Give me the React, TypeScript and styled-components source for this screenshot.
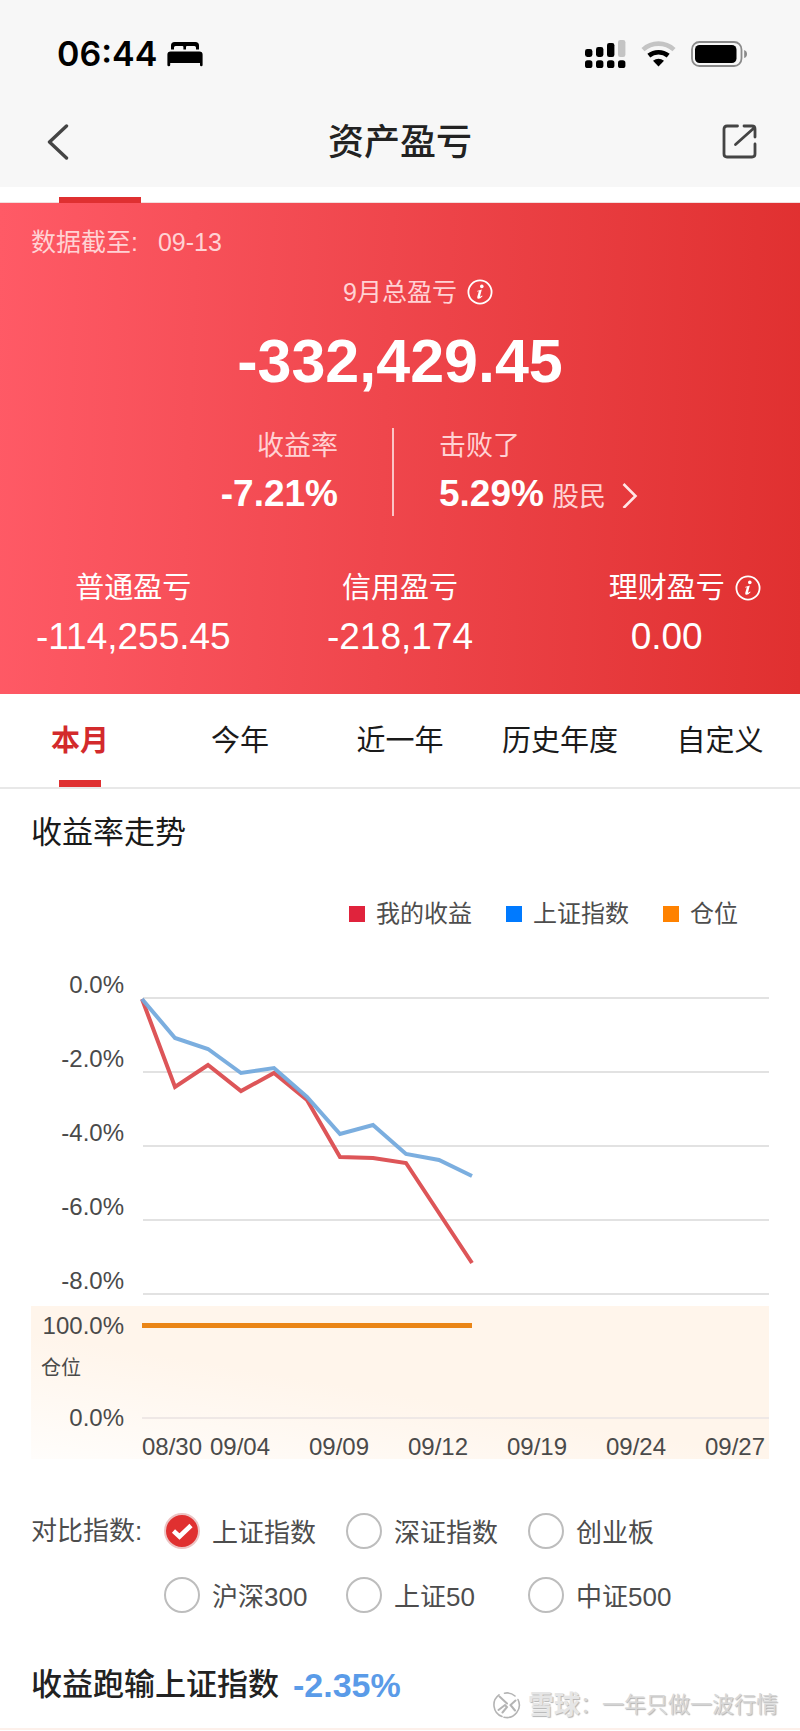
import React, { useState } from "react";
import styled, { createGlobalStyle } from "styled-components";

const sans = '"Liberation Sans", "Noto Sans CJK SC", sans-serif';

const GlobalStyle = createGlobalStyle`
  * { box-sizing: border-box; }
  body { margin: 0; background: #fff; font-family: ${sans}; font-weight: 400; color: #1a1a1a; }
  button { border: 0; padding: 0; background: none; font: inherit; color: inherit; cursor: pointer; }
  svg { display: block; }
`;

const Page = styled.main`
  position: relative;
  background: #fff;
`;

const TopArea = styled.header`
  background: #f7f7f7;
`;

const StatusBar = styled.div`
  display: flex;
  align-items: center;
  justify-content: space-between;
  height: 96px;
  padding: 11px 52px 0 57px;
`;

const Clock = styled.div`
  display: flex;
  align-items: center;
  gap: 10px;
  font-family: Inter, sans-serif;
  font-size: 34px;
  font-weight: 600;
  color: #000;
`;

const StatusIcons = styled.div`
  display: flex;
  align-items: center;
  gap: 15px;
`;

const NavBar = styled.div`
  display: flex;
  align-items: center;
  justify-content: space-between;
  height: 91px;
  padding: 0 42px;
`;

const NavTitle = styled.h1`
  margin: 0;
  padding-top: 2px;
  font-size: 36px;
  line-height: 44px;
  font-weight: 500;
  color: #222;
`;

const Strip = styled.div`
  display: flex;
  align-items: flex-end;
  height: 16px;
  padding-left: 59px;
  border-bottom: 1px solid #f3dede;
`;

const StripBar = styled.div`
  width: 82px;
  height: 6px;
  margin-bottom: -1px;
  background: #df3031;
`;

const Hero = styled.section`
  padding: 23px 0 35px;
  background: linear-gradient(92deg, #ff5a66 0%, #ef464c 48%, #e03030 100%);
  color: #fff;
`;

const AsOf = styled.div`
  display: flex;
  padding: 0 31px;
  gap: 20px;
  font-size: 25px;
  line-height: 32px;
  color: #ffd2d4;
`;

const HeroLabel = styled.div`
  display: flex;
  align-items: center;
  justify-content: center;
  margin-top: 18px;
  font-size: 25px;
  line-height: 32px;
  color: #ffd2d4;
`;

const InfoButton = styled.button`
  width: 26px;
  height: 26px;
  margin: 0 -36px 0 10px;
  color: #fff;
`;

const Total = styled.div`
  margin-top: 20px;
  font-size: 61px;
  line-height: 66px;
  font-weight: 700;
  text-align: center;
`;

const RateRow = styled.div`
  display: grid;
  grid-template-columns: 49% 2px 1fr;
  margin-top: 34px;
`;

const RateDivider = styled.div`
  background: #fbc4c6;
`;

const RateCell = styled.div<{ $end?: boolean }>`
  display: flex;
  flex-direction: column;
  gap: 8px;
  align-items: ${(p) => (p.$end ? "flex-end" : "flex-start")};
  padding: ${(p) => (p.$end ? "0 54px 0 0" : "0 0 0 45px")};
`;

const RateLabel = styled.span`
  font-size: 27px;
  line-height: 36px;
  color: #ffd2d4;
`;

const RateValue = styled.strong`
  font-size: 37px;
  line-height: 44px;
  font-weight: 700;
`;

const BeatLink = styled.button`
  display: flex;
  align-items: center;
  gap: 8px;
`;

const BeatUnit = styled.span`
  padding-top: 6px;
  margin-right: 8px;
  font-size: 27px;
  line-height: 38px;
  color: #ffd2d4;
`;

const Split = styled.div`
  display: grid;
  grid-template-columns: repeat(3, 1fr);
  margin-top: 54px;
`;

const SplitCell = styled.div`
  display: flex;
  flex-direction: column;
  gap: 9px;
  text-align: center;
`;

const SplitLabel = styled.div`
  display: flex;
  align-items: center;
  justify-content: center;
  font-size: 29px;
  line-height: 36px;
`;

const SplitValue = styled.div`
  font-size: 37px;
  line-height: 44px;
`;

const Tabs = styled.nav`
  display: grid;
  grid-template-columns: repeat(5, 1fr);
  border-bottom: 2px solid #e8e8e8;
`;

const Tab = styled.button<{ $active: boolean }>`
  display: flex;
  flex-direction: column;
  align-items: center;
  height: 93px;
  font-size: 29px;
  line-height: 94px;
  font-weight: ${(p) => (p.$active ? 700 : 400)};
  color: ${(p) => (p.$active ? "#d32a2c" : "#1a1a1a")};

  &::after {
    content: "";
    width: 42px;
    height: 7px;
    margin-top: -8px;
    background: ${(p) => (p.$active ? "#df3031" : "transparent")};
  }
`;

const Body = styled.section`
  padding: 24px 31px 23px;
  border-bottom: 2px solid #fdf0ea;
`;

const SectionTitle = styled.h2`
  margin: 0;
  font-size: 31px;
  line-height: 40px;
  font-weight: 400;
`;

const Legend = styled.ul`
  display: flex;
  justify-content: flex-end;
  gap: 34px;
  margin: 45px 0 30px;
  padding: 0 31px 0 0;
  list-style: none;
  font-size: 24px;
  line-height: 32px;
  color: #4d4d4d;
`;

const LegendItem = styled.li<{ $color: string }>`
  display: flex;
  align-items: center;
  gap: 11px;

  &::before {
    content: "";
    width: 16px;
    height: 16px;
    background: ${(p) => p.$color};
  }
`;

const ChartSvg = styled.svg`
  width: 100%;
  height: auto;
  font-family: ${sans};
  font-size: 24px;
  fill: #4a4a4a;
`;

const Compare = styled.div`
  display: grid;
  grid-template-columns: 133px 1fr;
  margin-top: 51px;
  font-size: 26px;
  line-height: 40px;
  color: #4d4d4d;
`;

const Options = styled.div`
  display: grid;
  grid-template-columns: repeat(3, minmax(0, 182px));
  row-gap: 24px;
`;

const Option = styled.label`
  display: flex;
  align-items: center;
  gap: 12px;
  height: 40px;
  white-space: nowrap;
`;

const OptionText = styled.span`
  padding-top: 4px;
`;

const Mark = styled.span`
  display: grid;
  flex: none;
  width: 36px;
  height: 36px;

  & > * { grid-area: 1 / 1; }
  & > svg { pointer-events: none; }
`;

const Radio = styled.input`
  appearance: none;
  width: 36px;
  height: 36px;
  margin: 0;
  border: 2px solid #bdbdbd;
  border-radius: 50%;
  background: #fff;

  &:checked {
    border-color: #ecc4c4;
    background: #e03030;
  }
`;

const Summary = styled.p`
  display: flex;
  gap: 14px;
  margin: 50px 0 0;
  font-size: 31px;
  line-height: 40px;
  font-weight: 500;
  color: #222;
`;

const SummaryValue = styled.strong`
  font-size: 34px;
  font-weight: 700;
  color: #5a9be8;
`;

const Watermark = styled.div`
  position: absolute;
  right: 22px;
  bottom: 11px;
  display: flex;
  align-items: center;
  font-size: 22px;
  line-height: 28px;
  color: #d8d8d8;
  text-shadow: 1px 1px 1px #b4b4b4;
`;

const WatermarkName = styled.b`
  margin-left: 7px;
  font-size: 26px;
  font-weight: 700;
  color: #e6e6e6;
`;

const InfoIcon = () => (
  <svg width="26" height="26" viewBox="0 0 26 26" fill="none">
    <circle cx="13" cy="13" r="11.6" stroke="currentColor" strokeWidth="1.8" />
    <circle cx="14.8" cy="7.4" r="1.8" fill="currentColor" />
    <path d="M10 12 14.800 10.600 13 17.500Q12.900 18.200 15.200 16.600L15.500 17.200Q13 20 11.200 19.800 9.800 19.500 10.300 17.700L11.800 12.500Q11.700 12.100 10 12.600Z" fill="currentColor" />
  </svg>
);

const BedIcon = () => (
  <svg width="36" height="26" viewBox="0 0 36 26" fill="#000">
    <path d="M4 8.4V4.6Q4 1 7.6 1h20.8Q32 1 32 4.6v3.8h-3V6.6Q29 5 27.4 5H20q-1 0-1 1v2.4h-2.6V6q0-1-1-1H8.6Q7 5 7 6.6v1.8Z" />
    <path d="M3.6 10.4h28.8q3.2 0 3.2 3.2V24q0 1.2-1.3 1.2T33 24v-2H3.2v2q0 1.2-1.4 1.2T.4 24V13.6q0-3.2 3.2-3.2Z" />
  </svg>
);

const SignalIcon = () => (
  <svg width="41" height="28" viewBox="0 0 41 28">
    <rect x="0" y="9" width="7.4" height="8" rx="2.4" />
    <rect x="11" y="7" width="7.4" height="10" rx="2.4" />
    <rect x="22" y="3" width="7.4" height="14" rx="2.2" />
    <rect x="33" y="0" width="7.4" height="17" rx="2.2" fill="#c4c4c4" />
    {[0, 11, 22, 33].map((x) => (
      <rect key={x} x={x} y="20.2" width="7.4" height="7.8" rx="2.6" />
    ))}
  </svg>
);

const WifiIcon = () => (
  <svg width="35" height="26" viewBox="0 0 35 26" fill="none" strokeWidth="4.6">
    <path d="M2 8.6Q8.700 2.600 17.500 2.600T33 8.600" stroke="#c4c4c4" />
    <path d="M7.800 14.600Q12 11.200 17.500 11.200T27.200 14.600" stroke="#000" />
    <path d="M12 19.800Q17.500 15.600 23 19.800L17.500 25.600Z" fill="#000" />
  </svg>
);

const BatteryIcon = () => (
  <svg width="57" height="28" viewBox="0 0 57 28" fill="none">
    <rect x="1" y="2" width="49.500" height="24" rx="7.500" stroke="#8a8a8a" strokeWidth="1.800" />
    <rect x="4" y="5" width="41.500" height="18" rx="4.600" fill="#000" />
    <path d="M53.200 10q2.800 1 2.800 4t-2.800 4Z" fill="#8a8a8a" />
  </svg>
);

const dayStep = 33;
const plotLeft = 112;
const plotWidth = 626;
const myReturn = [39, 127, 105, 131, 113, 140, 197, 198, 203, 253, 303];
const indexReturn = [39, 78, 89, 113, 108, 137, 174, 165, 194, 200, 216];
const ticks = ["0.0%", "-2.0%", "-4.0%", "-6.0%", "-8.0%"];
const dates: [string, number][] = [
  ["08/30", 141],
  ["09/04", 209],
  ["09/09", 308],
  ["09/12", 407],
  ["09/19", 506],
  ["09/24", 605],
  ["09/27", 704],
];
const toPoints = (ys: number[]) => ys.map((y, i) => `${plotLeft + i * dayStep - 1},${y}`).join(" ");

const TrendChart = () => (
  <ChartSvg viewBox="0 0 738 500" role="img" aria-label="收益率走势">
    <defs>
      <linearGradient id="positionFill" x1="0" y1="1" x2="0.400" y2="0.500">
        <stop offset="0" stopColor="#fffdfb" />
        <stop offset="1" stopColor="#fff5eb" />
      </linearGradient>
    </defs>
    {ticks.map((t, i) => (
      <g key={t}>
        <text x="93" y={33 + i * 74} textAnchor="end">{t}</text>
        <rect x={plotLeft} y={37 + i * 74} width={plotWidth} height="2" fill="#e2e2e2" />
      </g>
    ))}
    <polyline points={toPoints(myReturn)} fill="none" stroke="#dd5558" strokeWidth="4" />
    <polyline points={toPoints(indexReturn)} fill="none" stroke="#74aadd" strokeOpacity="0.95" strokeWidth="4" />
    <rect x="0" y="346" width="738" height="153" fill="url(#positionFill)" />
    <rect x={plotLeft - 1} y="457" width={plotWidth + 1} height="2" fill="#efe8e6" />
    <rect x={plotLeft - 1} y="363" width={dayStep * 10} height="5" fill="#ea8516" />
    <text x="93" y="374" textAnchor="end">100.0%</text>
    <text x="10" y="415" fontSize="20">仓位</text>
    <text x="93" y="466" textAnchor="end">0.0%</text>
    {dates.map(([d, x]) => (
      <text key={d} x={x} y="495" textAnchor="middle">{d}</text>
    ))}
  </ChartSvg>
);

const tabNames = ["本月", "今年", "近一年", "历史年度", "自定义"];
const indexes = ["上证指数", "深证指数", "创业板", "沪深300", "上证50", "中证500"];

export default function App() {
  const [tab, setTab] = useState("本月");
  const [index, setIndex] = useState("上证指数");

  return (
    <Page lang="zh-CN">
      <GlobalStyle />
      <TopArea>
        <StatusBar>
          <Clock>
            06:44
            <BedIcon />
          </Clock>
          <StatusIcons>
            <SignalIcon />
            <WifiIcon />
            <BatteryIcon />
          </StatusIcons>
        </StatusBar>
        <NavBar>
          <button type="button" aria-label="返回">
            <svg width="36" height="36" viewBox="0 0 36 36" fill="none" stroke="#444" strokeWidth="3.400" strokeLinecap="round" strokeLinejoin="round">
              <path d="M24.500 2 7.500 18l17 16" />
            </svg>
          </button>
          <NavTitle>资产盈亏</NavTitle>
          <button type="button" aria-label="分享">
            <svg width="36" height="36" viewBox="0 0 36 36" fill="none" stroke="#444" strokeWidth="2.800" strokeLinecap="round" strokeLinejoin="round">
              <path d="M15.500 2H5Q2 2 2 5v25q0 3 3 3h25q3 0 3-3V20" />
              <path d="M22 2h8q3 0 3 3v8M32 4 13.500 20.500" />
            </svg>
          </button>
        </NavBar>
      </TopArea>
      <Strip>
        <StripBar />
      </Strip>

      <Hero>
        <AsOf>
          <span>数据截至:</span>
          <span>09-13</span>
        </AsOf>
        <HeroLabel>
          9月总盈亏
          <InfoButton type="button" aria-label="总盈亏说明">
            <InfoIcon />
          </InfoButton>
        </HeroLabel>
        <Total>-332,429.45</Total>
        <RateRow>
          <RateCell $end>
            <RateLabel>收益率</RateLabel>
            <RateValue>-7.21%</RateValue>
          </RateCell>
          <RateDivider />
          <RateCell>
            <RateLabel>击败了</RateLabel>
            <BeatLink type="button">
              <RateValue>5.29%</RateValue>
              <BeatUnit>股民</BeatUnit>
              <svg width="16" height="28" viewBox="0 0 16 28" fill="none" stroke="#ffe6e6" strokeWidth="2.600">
                <path d="M1.500 4 13.500 16 1.500 28" />
              </svg>
            </BeatLink>
          </RateCell>
        </RateRow>
        <Split>
          <SplitCell>
            <SplitLabel>普通盈亏</SplitLabel>
            <SplitValue>-114,255.45</SplitValue>
          </SplitCell>
          <SplitCell>
            <SplitLabel>信用盈亏</SplitLabel>
            <SplitValue>-218,174</SplitValue>
          </SplitCell>
          <SplitCell>
            <SplitLabel>
              理财盈亏
              <InfoButton type="button" aria-label="理财盈亏说明">
                <InfoIcon />
              </InfoButton>
            </SplitLabel>
            <SplitValue>0.00</SplitValue>
          </SplitCell>
        </Split>
      </Hero>

      <Tabs>
        {tabNames.map((name) => (
          <Tab key={name} type="button" $active={name === tab} onClick={() => setTab(name)}>
            {name}
          </Tab>
        ))}
      </Tabs>

      <Body>
        <SectionTitle>收益率走势</SectionTitle>
        <Legend>
          <LegendItem $color="#e0233c">我的收益</LegendItem>
          <LegendItem $color="#007aff">上证指数</LegendItem>
          <LegendItem $color="#ff8200">仓位</LegendItem>
        </Legend>
        <TrendChart />
        <Compare role="radiogroup" aria-labelledby="compare-label">
          <span id="compare-label">对比指数:</span>
          <Options>
            {indexes.map((name) => (
              <Option key={name}>
                <Mark>
                  <Radio type="radio" name="index" checked={name === index} onChange={() => setIndex(name)} />
                  {name === index && (
                    <svg width="36" height="36" viewBox="0 0 36 36" fill="none" stroke="#fff" strokeWidth="4.600">
                      <path d="M9.500 18 15.500 23.500 27 12.500" />
                    </svg>
                  )}
                </Mark>
                <OptionText>{name}</OptionText>
              </Option>
            ))}
          </Options>
        </Compare>
        <Summary>
          收益跑输上证指数
          <SummaryValue>-2.35%</SummaryValue>
        </Summary>
      </Body>

      <Watermark>
        <svg width="28" height="28" viewBox="0 0 28 28" fill="none" stroke="#b4b4b4" strokeWidth="1.600" strokeLinecap="round">
          <path d="M6 3.800A12.500 12.500 0 0 0 9 25.500M11.500 2.200A12.200 12.200 0 0 1 22 5M25 8.500A12.500 12.500 0 0 1 11 26.200" />
          <path d="M6.500 5.500 14 12.500M22.500 9.500 17.500 14l4.500 5.500M5.500 19l6.500-5 2 2-4.500 5.500" strokeWidth="2" />
        </svg>
        <WatermarkName>雪球</WatermarkName>：一年只做一波行情
      </Watermark>
    </Page>
  );
}
